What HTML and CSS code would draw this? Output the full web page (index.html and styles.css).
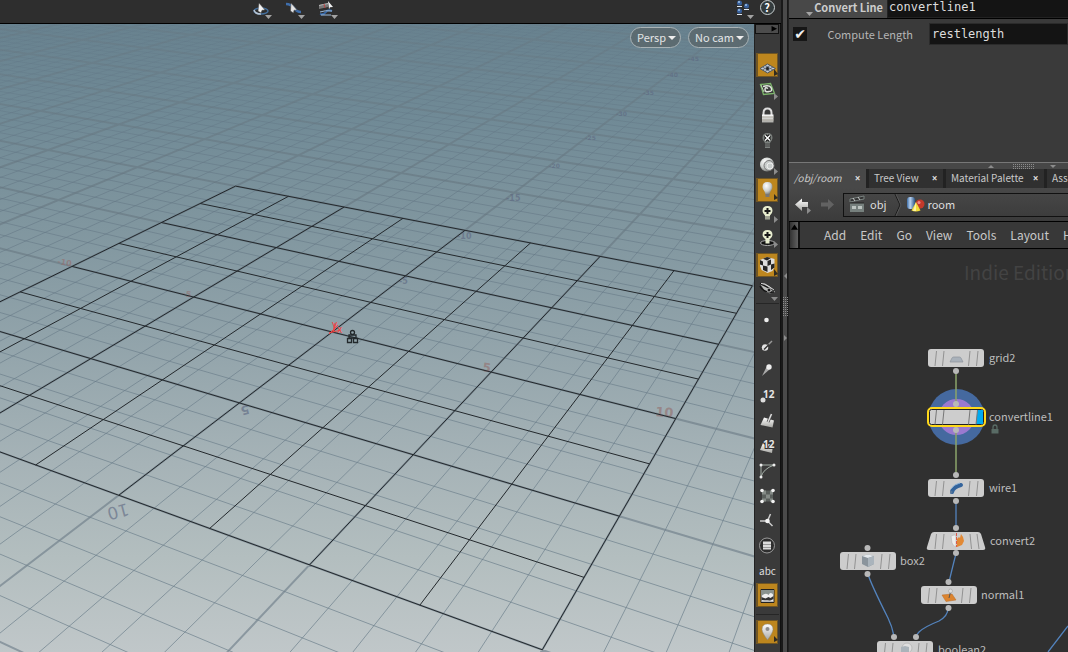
FILE: index.html
```html
<!DOCTYPE html>
<html lang="en">
<head>
<meta charset="utf-8">
<title>/obj/room</title>
<link rel="stylesheet" href="styles.css">
</head>
<body>
<svg class="defs" aria-hidden="true">
  <defs>
    <linearGradient id="silver" x1="0" y1="0" x2="0" y2="1"><stop offset="0" stop-color="#fff"/><stop offset="1" stop-color="#a8a8a4"/></linearGradient>
    <radialGradient id="ball" cx=".38" cy=".3" r=".75"><stop offset="0" stop-color="#fff"/><stop offset=".6" stop-color="#c9ccca"/><stop offset="1" stop-color="#6e706e"/></radialGradient>
    <linearGradient id="blueTube" x1="0" y1="0" x2="1" y2="0"><stop offset="0" stop-color="#3d6ea8"/><stop offset=".4" stop-color="#b9d2ee"/><stop offset="1" stop-color="#2c5487"/></linearGradient>
    <symbol id="drop" viewBox="0 0 7 4"><path d="M0 0h7L3.500 4z" fill="#a3a3a3"/></symbol>
    <symbol id="node" viewBox="0 0 56 18">
      <rect width="56" height="18" rx="3" fill="#cdcdcd"/>
      <path d="M8.500 2 7 17M16 2l-1.500 15M42 2l-1.500 15M50 2l-1.500 15" stroke="#929292" fill="none"/>
    </symbol>
  </defs>
</svg>
<main class="workspace">
  <section class="scene" aria-label="Scene view">
    <header class="scene-bar">
      <div class="tools">
        <button class="tool" aria-label="Tumble"><svg viewBox="0 0 24 22"><ellipse cx="9" cy="11" rx="7" ry="3" fill="none" stroke="#45709f" stroke-width="1.500"/><path d="M2 10q1 4 7 4" fill="none" stroke="#b6c4d2" stroke-width="1.500"/><path d="M7 3l6 7-3 .3-1 2.700-3-2z" fill="#f2f2f2" stroke="#444" stroke-width=".5"/><use href="#drop" x="13" y="15" width="7" height="4"/></svg></button>
        <button class="tool" aria-label="Select curve"><svg viewBox="0 0 24 22"><path d="M1 4q5 0 8 4t7 4" fill="none" stroke="#3f6eab" stroke-width="2.500"/><path d="M6 3l6 7-3 .3-.5 2.700-3-2z" fill="#e4e4e4" stroke="#444" stroke-width=".5"/><use href="#drop" x="13" y="15" width="7" height="4"/></svg></button>
        <button class="tool" aria-label="Camera roll"><svg viewBox="0 0 24 22"><path d="M1 5l9-2v4l-9 2z" fill="#777"/><path d="M1 5l9-2v1L1 6z" fill="#b5b5b5"/><path d="m6 4 1 4" stroke="#b44" stroke-width="1"/><path d="M10 1l5 6-3 .3-1 2z" fill="#f2f2f2"/><path d="M2 14q4 1 6-2t6-1" fill="none" stroke="#3566a4" stroke-width="2"/><path d="M2 12q5-2 12-1M3 15h10" fill="none" stroke="#9dbbdb"/><use href="#drop" x="13" y="15" width="7" height="4"/></svg></button>
      </div>
      <div class="tools tools-end">
        <button class="tool" aria-label="Display sets"><svg viewBox="0 0 24 22"><g fill="#375f9b"><circle cx="5.500" cy="3" r="2.500"/><circle cx="12.500" cy="6" r="2.500"/><circle cx="5.500" cy="11" r="2.500"/></g><g fill="#9fc2e8"><circle cx="5" cy="2" r="1"/><circle cx="12" cy="5" r="1"/><circle cx="5" cy="10" r="1"/></g><path d="M3 6.500h5M10 9.500h5M3 14.500h5" stroke="#e2e8ee" stroke-width="1.200"/><use href="#drop" x="13" y="15" width="7" height="4"/></svg></button>
        <button class="tool help" aria-label="Help"><span>?</span></button>
      </div>
    </header>
    <div class="scene-body">
      <div class="viewport">
        <svg class="plane" viewBox="0 24 754 628" preserveAspectRatio="xMidYMid slice" role="img" aria-label="Perspective grid">
          <defs>
            <linearGradient id="sky" x1="0" y1="0" x2="0" y2="1">
              <stop offset="0" stop-color="#68828f"/><stop offset=".15" stop-color="#708a96"/><stop offset=".32" stop-color="#80969f"/><stop offset=".5" stop-color="#91a3aa"/><stop offset=".7" stop-color="#a6b3b7"/><stop offset=".85" stop-color="#b3bebf"/><stop offset="1" stop-color="#c0c7c9"/>
            </linearGradient>
            <linearGradient id="minor" gradientUnits="userSpaceOnUse" x1="0" y1="24" x2="0" y2="652">
              <stop offset="0" stop-color="#5d7282" stop-opacity=".2"/><stop offset=".25" stop-color="#637684" stop-opacity=".55"/><stop offset="1" stop-color="#6c7f8b" stop-opacity=".7"/>
            </linearGradient>
            <linearGradient id="major" gradientUnits="userSpaceOnUse" x1="0" y1="24" x2="0" y2="652">
              <stop offset="0" stop-color="#66757f" stop-opacity=".35"/><stop offset=".25" stop-color="#667680" stop-opacity=".6"/><stop offset="1" stop-color="#75848f" stop-opacity=".7"/>
            </linearGradient>
          </defs>
          <rect y="24" width="754" height="628" fill="url(#sky)"/>
          <path id="minor-lines" class="line-minor"/>
          <path id="major-lines" class="line-major"/>
          <g class="axis-z">
            <text x="127" y="503" transform="rotate(165 127 503)" class="axis-near">10</text>
            <text x="248" y="405" transform="rotate(165 248 405)" class="axis-mid">5</text>
            <text x="399" y="284" class="axis-far">-5</text><text x="457" y="239" class="axis-far">-10</text><text x="506" y="201" class="axis-far">-15</text><text x="549" y="168" class="axis-tiny">-20</text><text x="585" y="140" class="axis-tiny">-25</text><text x="616" y="116" class="axis-tiny">-30</text><text x="643" y="95" class="axis-tiny">-35</text><text x="667" y="77" class="axis-tiny">-40</text><text x="688" y="61" class="axis-tiny">-45</text>
          </g>
          <g class="axis-x">
            <text x="655" y="416" transform="rotate(5 655 416)" class="axis-wide">10</text>
            <text x="482" y="371" transform="rotate(9 482 371)" class="axis-mid">5</text>
            <text x="182" y="296" transform="rotate(9 182 296)" class="axis-far">-5</text>
            <text x="57" y="264" transform="rotate(9 57 264)" class="axis-far">-10</text>
          </g>
          <path id="mesh-lines" class="line-mesh"/>
          <g class="gizmo"><path d="M333 332 335 323M329 333l12-3M329 334l9-9" /><text x="332" y="328">y</text><text x="337" y="333">x</text></g>
          <g fill="none" stroke="#22282b" stroke-width="1.300"><circle cx="352.500" cy="332.500" r="2"/><path d="M349 335h7v3h-7zM347.500 338.500h4v4h-4zM353.500 338.500h4v4h-4z"/></g>
        </svg>
        <div class="camera-menus">
          <button class="pill">Persp<i class="caret"></i></button>
          <button class="pill">No cam<i class="caret"></i></button>
        </div>
      </div>
      <nav class="display-bar" aria-label="Display options">
        <button class="expander" aria-label="Expand"><svg viewBox="0 0 24 8"><path d="M17 1l6 3-6 3z" fill="#000"/></svg></button>
        <button class="opt on" aria-label="Reference plane"><svg viewBox="0 0 26 25"><path d="M5 15.500 12.500 11l8 4.500-8 4.500z" fill="#c6ccd0" stroke="#4e565e"/><path d="m7.500 14 7.500 4.500M10 12.500l8 4.500m-8 1.500 8-4.500M7.500 17l7.500-4.500" stroke="#4e5c6e" stroke-width=".8"/><circle cx="12.500" cy="15.500" r="1.500" fill="#222"/><path d="M19 16v7l4-2z" fill="#302b20"/></svg></button>
        <button class="opt" aria-label="Construction plane"><svg viewBox="0 0 26 25"><path d="M5.500 6.500l10-1 4 10-11 1z" fill="none" stroke="#7db56c" stroke-width="1.300"/><path d="M8 8.500q6-2 8 1 2 4-2 4-4 1-4-2t3-1" fill="none" stroke="#e2e6df" stroke-width="1.500"/><path d="M6 7l3 7" stroke="#b9d3b0"/><path d="M19 15v7l4-3.500z" fill="#8c8c8c"/></svg></button>
        <button class="opt" aria-label="Lock camera"><svg viewBox="0 0 26 25"><path d="M8.500 12V10q0-4.500 4-4.500t4 4.500v2" fill="none" stroke="#ddd" stroke-width="2"/><path d="M7 11.500h11.500v8H7z" fill="url(#silver)"/><path d="M7 14h11.500m-11.500 3h11.500" stroke="#aaa69c"/></svg></button>
        <button class="opt" aria-label="No lights"><svg viewBox="0 0 26 25"><path d="M12.500 5q5 0 5 5 0 2-2.500 5v5h-5v-5q-2.500-3-2.500-5 0-5 5-5z" fill="#7c817e"/><path d="M10 7.500l5 5m0-5-5 5" stroke="#111" stroke-width="3.500"/><path d="M10 7.500l5 5m0-5-5 5" stroke="#fff" stroke-width="1.500"/><path d="M10 16h5m-5 2h5" stroke="#414141"/></svg></button>
        <button class="opt" aria-label="Shading"><svg viewBox="0 0 26 25"><circle cx="12" cy="11.500" r="7" fill="url(#ball)"/><circle cx="14" cy="12.500" r="5" fill="#c8cccb" stroke="#777"/><circle cx="15" cy="13" r="3" fill="none" stroke="#eee"/><path d="M19 15v7l4-3.500z" fill="#8c8c8c"/></svg></button>
        <button class="opt on" aria-label="Headlight"><svg viewBox="0 0 26 25"><path d="M12.500 4q5 0 5 5 0 2-2 4.500l-1 3h-4l-1-3q-2-2.500-2-4.500 0-5 5-5z" fill="url(#ball)"/><path d="M10.500 16h4v3h-4z" fill="#777"/><path d="M19 16v6l4-2z" fill="#302b20"/></svg></button>
        <button class="opt" aria-label="Add light"><svg viewBox="0 0 26 25"><path d="M12.500 3q5 0 5 5 0 2-2.500 4.500v4h-5v-4Q7.500 10 7.500 8q0-5 5-5z" fill="#e8edcf"/><path d="M12.500 5v6m-3-3h6" stroke="#181818" stroke-width="2"/><path d="M10 14h5m-5 2h5" stroke="#555"/><path d="M19 13v7l4-3.500z" fill="#8c8c8c"/></svg></button>
        <button class="opt" aria-label="Add shadow light"><svg viewBox="0 0 26 25"><ellipse cx="12.500" cy="15" rx="7" ry="2.500" fill="#111" stroke="#aaa"/><path d="M12.500 2q5 0 5 5 0 2-3 4.500v4h-4v-4Q7.500 9 7.500 7q0-5 5-5z" fill="#e8edcf"/><path d="M12.500 4v6m-3-3h6" stroke="#181818" stroke-width="2"/><path d="M19 13v7l4-3.500z" fill="#8c8c8c"/></svg></button>
        <button class="opt on" aria-label="Materials"><svg viewBox="0 0 26 25"><path d="M5 7l7-3 7.500 2v8l-2 4-5 2-6-3-1.500-4z" fill="#dedede"/><path d="M8 5.700L12 4l4 1-4 2.500zM5 7l3 1.500v4L5 11.500zM12.500 8l3.500-1.500v5l-3.500 1.500zM8 12.500l4.500 1V19L8 17zM16 11.500l3.500-1v4L16 17z" fill="#252525"/><path d="M19 16v7l4-2z" fill="#302b20"/></svg></button>
        <button class="opt" aria-label="Visibility"><svg viewBox="0 0 26 25"><path d="M5 6q9-1 15 8-7 3-10-1z" fill="#b9bbb9"/><path d="M5 8q3 7 14 6M5 5.500l14 7" fill="none" stroke="#161616" stroke-width="1.500"/><path d="M6 5.500l4 .5 9 6" fill="none" stroke="#dcdcdc"/><circle cx="14" cy="12" r="2" fill="#151515" stroke="#bbb"/><path d="M16 19h7l-3.500 4z" fill="#8c8c8c"/></svg></button>
        <hr class="rule">
        <button class="opt" aria-label="Points"><svg viewBox="0 0 26 25"><circle cx="11.500" cy="12" r="2.300" fill="#eee"/></svg></button>
        <button class="opt" aria-label="Point normals"><svg viewBox="0 0 26 25"><path d="M10 15l7-7" stroke="#999" stroke-width="1.500"/><circle cx="10" cy="14.500" r="3.200" fill="#e3e3e3"/><path d="M9 16.500l5-5" stroke="#333" fill="none" stroke-width="1.500"/></svg></button>
        <button class="opt" aria-label="Point trails"><svg viewBox="0 0 26 25"><path d="M7 18l4.500-9 3 2.500z" fill="#aaa"/><circle cx="14" cy="9" r="2.700" fill="#eee"/></svg></button>
        <button class="opt" aria-label="Point numbers"><svg viewBox="0 0 26 25"><circle cx="8" cy="17" r="2.500" fill="#ddd"/><text x="8" y="15" class="ico-num">12</text></svg></button>
        <button class="opt" aria-label="Primitive normals"><svg viewBox="0 0 26 25"><path d="M9 9.500l10 3-1.500 7-12-2.500z" fill="url(#silver)"/><path d="M13 14l3.500-8" stroke="#444" stroke-width="3"/><path d="M13 14l3.500-8" stroke="#ddd" stroke-width="1.500"/></svg></button>
        <button class="opt" aria-label="Primitive numbers"><svg viewBox="0 0 26 25"><path d="M8 10l10 2-1 8-12-3z" fill="url(#silver)"/><text x="8" y="15" class="ico-num ico-dark">12</text></svg></button>
        <button class="opt" aria-label="Hulls"><svg viewBox="0 0 26 25"><path d="M6 19V7h13" fill="none" stroke="#a5b0a8"/><path d="M6 19Q8 11 19 7" fill="none" stroke="#a5b0a8"/><g fill="#eee"><circle cx="6" cy="7" r="1.500"/><circle cx="19" cy="7" r="1.500"/><circle cx="6" cy="19" r="1.500"/></g></svg></button>
        <button class="opt" aria-label="UV checker"><svg viewBox="0 0 26 25"><path d="M7 7.500h11v11H7z" fill="#5a5f5c"/><path d="M7 7.500h4v4H7zM15 7.500h3v4h-3zM11 11.500h4v4h-4zM7 15.500h4v3H7zM15 15.500h3v3h-3z" fill="#858b87"/><g fill="#f2f2f2"><circle cx="7" cy="7.500" r="1.800"/><circle cx="18" cy="7.500" r="1.800"/><circle cx="7" cy="18.500" r="1.800"/><circle cx="18" cy="18.500" r="1.800"/></g></svg></button>
        <button class="opt" aria-label="Axis gnomon"><svg viewBox="0 0 26 25"><path d="M12.500 13l3-7m-3 7 5 5m-5-5H5" stroke="#ccc" stroke-width="1.500"/><circle cx="12.500" cy="13" r="2.300" fill="#f4f4f4"/></svg></button>
        <button class="opt" aria-label="Information"><svg viewBox="0 0 26 25"><circle cx="12" cy="12.500" r="7.500" fill="#2e2e2e" stroke="#999"/><path d="M8 8.500h8v8H8z" fill="#ddd"/><path d="M8 11.500h8m-8 3h8" stroke="#999"/></svg></button>
        <button class="opt abc">abc</button>
        <button class="opt on" aria-label="Background image"><svg viewBox="0 0 26 25"><path d="M6 6.500h13v13H6z" fill="#eee" stroke="#222"/><path d="M6.500 7h12v5q-3-4-5 0-3-3-7 1z" fill="#8a938f"/><path d="M6.500 14l4 1.500 3-1.500 2 1 3-2v3l-4 2-8-1z" fill="#333"/><path d="M7 18l5-1 6 1v1H7z" fill="#bbb"/></svg></button>
        <hr class="rule rule-wide">
        <button class="opt on" aria-label="Pins"><svg viewBox="0 0 26 25"><path d="M12.500 4q5.500 0 5.500 5.500 0 3-5.500 10.500Q7 12.500 7 9.500 7 4 12.500 4z" fill="url(#silver)" stroke="#8a8577" stroke-width=".5"/><circle cx="12.500" cy="9" r="2" fill="#8c8c8c"/><path d="M19 16v6l4-2z" fill="#302b20"/></svg></button>
      </nav>
    </div>
  </section>

  <div class="splitter" role="separator" aria-label="Resize panes">
    <svg viewBox="0 0 7 70"><path d="M4 0v6L1 3z" fill="#8c8c8c"/><path d="M1 62v6l3-3z" fill="#8c8c8c"/><path d="M.5 24v20M2.500 24v20M4.500 24v20" stroke="#8c8c8c" stroke-dasharray="1 1"/></svg>
  </div>

  <section class="side">
    <form class="params" aria-label="Parameters">
      <div class="param-head">
        <label for="op-name">Convert Line</label>
        <svg class="head-drop" viewBox="0 0 7 4"><use href="#drop"/></svg>
        <input id="op-name" type="text" value="convertline1" spellcheck="false">
      </div>
      <div class="param-row">
        <input id="compute" class="tick" type="checkbox" checked>
        <label for="compute">Compute Length</label>
        <input type="text" value="restlength" aria-label="Length attribute" spellcheck="false">
      </div>
    </form>
    <div class="hsplit" role="separator" aria-label="Resize panels">
      <svg viewBox="0 0 70 6"><path d="M1 5h6L4 2z" fill="#8c8c8c"/><path d="M63 2h6l-3 3z" fill="#8c8c8c"/><path d="M26 1.500h21M26 3.500h21M26 5.500h21" stroke="#8c8c8c" stroke-dasharray="1 1"/></svg>
    </div>
    <div class="tabs">
      <div class="tab active"><button class="tab-name">/obj/room</button><button class="close" aria-label="Close /obj/room">×</button></div>
      <div class="tab"><button class="tab-name">Tree View</button><button class="close" aria-label="Close Tree View">×</button></div>
      <div class="tab"><button class="tab-name">Material Palette</button><button class="close" aria-label="Close Material Palette">×</button></div>
      <div class="tab"><button class="tab-name">Asset Browser</button></div>
    </div>
    <div class="path-bar">
      <button class="nav" aria-label="Back"><svg viewBox="0 0 20 20"><path d="M1 9.500l7-6V7h6v5H8v4z" fill="url(#silver)"/><path d="M13 12v7l4-3.500z" fill="#8c8c8c"/></svg></button>
      <button class="nav" aria-label="Forward"><svg viewBox="0 0 20 20"><path d="M16 9.500l-6-5.500v3.500H3v4h7V15z" fill="#626262"/></svg></button>
      <div class="path">
        <button class="crumb"><svg viewBox="0 0 18 18"><path d="M1 8h14v9H1z" fill="#76807d"/><path d="M1 4l14-3v3L1 7z" fill="#333" stroke="#79827f"/><path d="M4 3l2 3m3-4 2 3" stroke="#ccc"/><path d="M3 11h4v3H3zm6 0h4v3H9z" fill="#bcc4c0"/><path d="M1 8h14" stroke="#222"/></svg>obj</button>
        <svg class="chevron" viewBox="0 0 8 22"><path d="M1 0l5 11-5 11" fill="none" stroke="#1a1a1a"/><path d="M2 0l5 11-5 11" fill="none" stroke="#565656"/></svg>
        <button class="crumb"><svg viewBox="0 0 18 18"><rect x="0" y="2" width="8" height="12" rx="3" fill="url(#blueTube)"/><circle cx="13" cy="9" r="4.500" fill="#c3392b"/><circle cx="12" cy="7.500" r="1.500" fill="#e88"/><path d="M9 7l4.500 8.500q-5 2-9 0z" fill="#f0dc3c"/><path d="M9 7l-3 9h3z" fill="#fff3a0"/></svg>room</button>
      </div>
    </div>
    <nav class="menu-bar">
      <button class="grip" aria-label="Collapse menu"><svg viewBox="0 0 8 6"><path d="M0 6h8L4 0z" fill="#000"/></svg></button>
      <div class="menus"><button>Add</button><button>Edit</button><button>Go</button><button>View</button><button>Tools</button><button>Layout</button><button>Help</button></div>
    </nav>
    <div class="network">
      <svg role="img" aria-label="Node network">
        <g transform="translate(-789 -249)">
          <text x="964" y="280" class="edition">Indie Edition</text>
          <circle cx="956.500" cy="417" r="28" fill="#45699f"/><circle cx="956.500" cy="417" r="18" fill="#9a79cf"/>
          <g fill="none" stroke="#8aa46a" stroke-width="1.500"><path d="M956 371v33M956 430v46"/></g>
          <g fill="none" stroke="#5383bd" stroke-width="1.300"><path d="M956 501v27M956 554q-1 3-7 28M868 574q2 8 20 44 4 8 6 18M948 608q0 8-9 13-15 6-20 11-3 3-3 5M1048 652l20-26"/></g>
          <g fill="#b8b8b8"><circle cx="956" cy="371" r="3"/><circle cx="956" cy="404" r="3"/><circle cx="956" cy="430" r="3"/><circle cx="956" cy="475" r="3"/><circle cx="956" cy="501" r="3"/><circle cx="956" cy="528" r="3"/><circle cx="956" cy="553" r="3"/><circle cx="948.500" cy="582" r="3"/><circle cx="948.500" cy="608" r="3"/><circle cx="867.500" cy="548" r="3"/><circle cx="867.500" cy="574" r="3"/><circle cx="894" cy="637" r="3"/><circle cx="916" cy="637" r="3"/></g>
          <use href="#node" x="928" y="349" width="56" height="18"/>
          <path d="M950 362l2-4q.5-1 1.500-1h6q1 0 1.500 1l2 4z" fill="#a9b1ba" stroke="#8c949c" stroke-width=".7"/>
          <rect x="928" y="408" width="57" height="18" rx="4" fill="#cdcdcd" stroke="#ffd91a" stroke-width="2"/>
          <rect x="929.500" y="409.500" width="54" height="15" rx="2" fill="#cdcdcd" stroke="#222"/>
          <path d="M977.500 410h5.500v14h-7z" fill="#00aaf0"/>
          <path d="M936.500 410l-1.500 14.500M944 410l-1.500 14.500M970 410l-1.500 14.500M977.500 410l-1.500 14.500" stroke="#777"/>
          <use href="#node" x="928" y="479" width="56" height="18"/>
          <path d="M952 492q1-5 9-7" fill="none" stroke="#34649c" stroke-width="4" stroke-linecap="round"/><path d="M951 489q3-5 9-6" fill="none" stroke="#88aed4"/><path d="M950 490v4l3-2z" fill="#5b7899"/>
          <path d="M934 532h44q2 0 3 2l4 13q1 3-2 3h-54q-3 0-2-3l4-13q1-2 3-2z" fill="#cdcdcd"/>
          <path d="M936.500 534 935 549M944 534l-1.500 15M970 534l1.500 15M977 534l2 15" stroke="#929292"/>
          <path d="M951 536q4-2 5 0v11q-3-1-4-4z" fill="#eee" stroke="#aaa" stroke-width=".5"/><path d="M957 539l2-2 1 1 1-4 2 3 1 4-2 4-5 2z" fill="#e28935"/><path d="M956.500 533v14" stroke="#d95b4c" stroke-dasharray="3 1"/>
          <use href="#node" x="921" y="586" width="56" height="18"/>
          <path d="M942 595l10-1 4 6-10 1.500z" fill="#dc842f" stroke="#b86a24" stroke-width=".5"/><path d="M949 598l1.500-6" stroke="#555"/><circle cx="950.500" cy="591" r="2" fill="#ddd" stroke="#999" stroke-width=".5"/>
          <use href="#node" x="840" y="552" width="56" height="18"/>
          <path d="M862 556l6-1.500 6 1.500v8l-6 3-6-3z" fill="#8a949c"/><path d="M862 556l6 2 6-2-6-1.500z" fill="#e5eaee"/><path d="M868 558v9l6-3v-8z" fill="#aab4bc"/>
          <use href="#node" x="877" y="641" width="56" height="18"/>
          <circle cx="907" cy="648" r="5" fill="#dedede" stroke="#bbb"/><path d="M901 647l4-1 4 1v5h-8z" fill="#aab3ba"/>
          <path d="M993 429v-1.500q0-2.500 2-2.500t2 2.500v1.500" fill="none" stroke="#596b65" stroke-width="1.300"/><path d="M991.500 429h7v4.500h-7z" fill="#596b65"/>
          <g class="node-name"><text x="989" y="362">grid2</text><text x="989" y="421">convertline1</text><text x="989" y="492">wire1</text><text x="990" y="545">convert2</text><text x="900" y="565">box2</text><text x="981" y="599">normal1</text><text x="938" y="654">boolean2</text></g>
        </g>
      </svg>
    </div>
  </section>
</main>
<script src="grid.js"></script>
</body>
</html>
```

FILE: grid.js
```js
// Projects ground-plane coordinates (x, z) into the viewport's drawing space.
const cam = { a: 25.01, b: -24.098, c: 332.1, d: 2.872, e: 4.8185, f: 332, g: -0.013836, h: -0.02324 };

function depth(x, z) {
  return cam.g * x + cam.h * z + 1;
}

function project(x, z) {
  const w = depth(x, z);
  const u = (cam.a * x + cam.b * z + cam.c) / w;
  const v = (cam.d * x + cam.e * z + cam.f) / w;
  return u.toFixed(1) + " " + v.toFixed(1);
}

// Lines are cut just before they pass behind the camera.
const NEAR = 0.2;
const FAR = -160;

function lineX(x) {
  const end = (NEAR - 1 - cam.g * x) / cam.h;
  return "M" + project(x, FAR) + "L" + project(x, end);
}

function lineZ(z) {
  const end = (NEAR - 1 - cam.h * z) / cam.g;
  return "M" + project(FAR, z) + "L" + project(end, z);
}

let minor = "";
let major = "";
for (let k = -110; k <= 60; k++) {
  const pair = (depth(k, FAR) > NEAR ? lineX(k) : "") + (depth(FAR, k) > NEAR ? lineZ(k) : "");
  if (k % 5 === 0) major += pair;
  else minor += pair;
}

let mesh = "";
for (let k = -10; k <= 10; k += 2.5) {
  mesh += "M" + project(k, -10) + "L" + project(k, 10);
  mesh += "M" + project(-10, k) + "L" + project(10, k);
}

document.getElementById("minor-lines").setAttribute("d", minor);
document.getElementById("major-lines").setAttribute("d", major);
document.getElementById("mesh-lines").setAttribute("d", mesh);
```

FILE: styles.css
```css
* { box-sizing: border-box; }
body { margin: 0; background: #303030; color: #c8c8c8; font: 12px/16px "Noto Sans CJK SC", "Noto Sans", sans-serif; }
button, input { margin: 0; padding: 0; border: 0; background: none; color: inherit; font: inherit; }
svg { display: block; }
.defs { position: absolute; width: 0; height: 0; }
.workspace { display: grid; grid-template-columns: minmax(0, 1fr) 7px 280px; height: 100vh; min-height: 652px; overflow: hidden; }

.scene { display: flex; flex-direction: column; min-width: 0; min-height: 0; background: #3a3a3a; }
.scene-bar { display: flex; justify-content: space-between; height: 24px; background: #2e2e2e; border-bottom: 1px solid #000; }
.tools { display: flex; gap: 9px; padding-left: 252px; }
.tools-end { gap: 0; padding: 0 2px 0 0; }
.tools-end .tool:first-child { width: 21px; }
.tool { width: 24px; height: 22px; }
.tool svg { width: 24px; height: 22px; }
.help { display: grid; place-items: center; height: 15px; }
.help span { width: 15px; height: 15px; border: 1px solid #c9d0d2; border-radius: 50%; background: #333b3d; color: #fff; font-size: 11px; font-weight: 700; line-height: 13px; text-align: center; }
.scene-body { display: flex; flex: 1; min-height: 0; }
.viewport { position: relative; flex: 1; min-width: 0; border-right: 1px solid #222; }
.plane { width: 100%; height: 100%; }
.line-minor { fill: none; stroke: url(#minor); stroke-width: 1; }
.line-major { fill: none; stroke: url(#major); stroke-width: 2; }
.line-mesh { fill: none; stroke: #23282c; stroke-width: 1; }
.axis-z, .axis-x { font-family: "DejaVu Sans", sans-serif; font-weight: 700; }
.axis-z { fill: #5c6680; fill-opacity: .6; }
.axis-x { fill: #94706f; fill-opacity: .65; }
.axis-near { font-size: 17px; font-weight: 400; }
.axis-mid { font-size: 12px; }
.axis-wide { font-size: 13px; }
.axis-far { font-size: 8px; }
.axis-tiny { font-size: 6px; }
.gizmo { fill: #f04343; stroke: none; font: 10px "Noto Sans", sans-serif; }
.gizmo path { fill: none; stroke: #f04343; }
.camera-menus { position: absolute; top: 3px; right: 5px; display: flex; gap: 7px; }
.pill { display: flex; align-items: center; gap: 2px; height: 21px; padding: 0 4px 2px 6px; border: 1px solid #a9b2b5; border-radius: 11px; background: #5c6b71; color: #e2e5e6; font-size: 11px; }
.caret { margin-top: 3px; border: 4px solid transparent; border-top-color: #eee; border-bottom: 0; }

.display-bar { display: flex; flex-direction: column; flex: none; width: 26px; border-right: 1px solid #111; background: #3a3a3a; }
.expander { height: 10px; margin: 0 1px 19px 0; border: 1px solid #111; background: #4c4c4c; }
.opt { flex: none; width: 25px; height: 25px; padding: 0; }
.opt svg { width: 26px; height: 25px; }
.on { background: linear-gradient(#bd861e, #bd861e) 3px 1px / 19px 22px no-repeat, linear-gradient(#705624, #705624) 1px 0 / 22px 24px no-repeat; }
.ico-num { fill: #e5e5e5; font: 700 10px "Noto Sans", sans-serif; }
.ico-dark { stroke: #333; stroke-width: 2px; paint-order: stroke; }
.abc { color: #ddd; font-size: 10px; }
.rule { width: 23px; height: 1px; margin: 0 0 4px 1px; border: 0; background: #262626; }
.rule-wide { margin: 6px 0 5px 1px; }

.splitter { display: grid; place-items: center; padding-bottom: 36px; border: solid #191919; border-width: 0 1px 0 2px; background: #4a4a4a; }
.splitter svg { width: 7px; height: 70px; }
.side { display: flex; flex-direction: column; min-width: 0; overflow: hidden; border-left: 1px solid #222; background: #3a3a3a; }
.params { height: 162px; }
.params input[type="text"] { flex: 1; min-width: 0; background: #141414; color: #ddd; font-family: "DejaVu Sans Mono", monospace; }
.param-head { position: relative; display: flex; height: 19px; border-bottom: 1px solid #000; background: #484848; }
.param-head label { width: 98px; padding-right: 4px; color: #ccc; font-size: 11px; font-weight: 700; line-height: 14px; text-align: right; }
.param-head input[type="text"] { height: 18px; padding: 0 1px 4px; border: solid #222; border-width: 0 0 1px 1px; }
.head-drop { position: absolute; left: 17px; bottom: 2px; width: 7px; height: 4px; }
.param-row { display: flex; align-items: center; height: 22px; margin-top: 4px; padding-left: 4px; }
.tick { width: 14px; height: 14px; appearance: none; background: #161616; }
.tick:checked::after { content: "✔"; display: block; width: 14px; color: #f1f1f1; font: 14px/14px "DejaVu Sans", sans-serif; text-align: center; }
.param-row label { flex: none; width: 122px; padding-right: 16px; font-size: 11px; text-align: right; color: #b5b5b5; }
.param-row input[type="text"] { height: 22px; padding: 0 2px; border: 1px solid #2b2b2b; }
.hsplit { display: flex; justify-content: center; height: 7px; padding-left: 187px; border-top: 1px solid #777; background: #474747; }
.hsplit svg { flex: none; width: 70px; height: 6px; }

.tabs { display: flex; gap: 3px; height: 19px; overflow: hidden; background: #222; }
.tab { display: flex; flex: none; align-items: center; justify-content: space-between; width: 74px; padding: 0 4px 1px 5px; background: #303030; font-size: 10px; }
.tab-name { white-space: nowrap; }
.tab.active { width: 77px; background: #484848; font-style: italic; }
.tab:nth-child(3) { width: 98px; }
.tab:nth-child(4) { width: 90px; }
.close { width: 9px; color: #ddd; font: 700 10px/12px "Noto Sans", sans-serif; }
.path-bar { display: flex; align-items: center; gap: 4px; height: 34px; padding-left: 5px; border-bottom: 1px solid #000; background: linear-gradient(#484848, #3b3b3b); }
.nav { width: 20px; height: 20px; }
.path { display: flex; flex: 1; height: 24px; margin-left: 1px; border: solid #111; border-width: 1px 0 1px 1px; }
.crumb { display: flex; align-items: center; gap: 3px; padding: 0 7px 2px 5px; color: #ddd; font-size: 11px; }
.crumb svg { width: 18px; height: 18px; }
.chevron { flex: none; width: 8px; height: 22px; }
.menu-bar { display: flex; height: 27px; border-bottom: 1px solid #000; background: #383838; }
.grip { width: 11px; padding: 2px 1px; border: solid #111; border-width: 0 2px 0 1px; background: linear-gradient(90deg, #333, #606060); }
.grip svg { width: 7px; height: 6px; margin-bottom: 16px; }
.menus { display: flex; gap: 14px; padding-left: 24px; font-size: 12px; }
.network { flex: 1; min-height: 0; background: #303030; }
.network svg { width: 100%; height: 100%; }
.edition { fill: #434343; font-size: 19px; }
.node-name { fill: #bdbdbd; font-size: 11px; }
```
